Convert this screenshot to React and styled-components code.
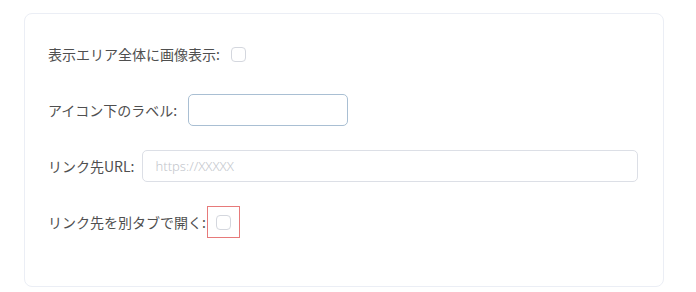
import React from "react";
import styled, { createGlobalStyle } from "styled-components";

const GlobalStyle = createGlobalStyle`
  body {
    margin: 0;
    background: #fff;
    font-family: "Noto Sans CJK JP", "Noto Sans", sans-serif;
  }
`;

const Page = styled.div`
  padding: 13px 32px 6px 24px;
`;

const Card = styled.div`
  border: 1px solid #ebeef5;
  border-radius: 8px;
  padding: 24px 25px 24px 23px;
`;

const Row = styled.div`
  display: flex;
  align-items: center;
  height: 32px;
  margin-bottom: 24px;
`;

const Label = styled.label`
  font-size: 14px;
  color: #4f4f4f;
  white-space: nowrap;
  margin-right: ${(p) => p.$gap ?? 6}px;
`;

const Checkbox = styled.span`
  display: inline-block;
  box-sizing: border-box;
  width: 15px;
  height: 15px;
  border: 1px solid #d4d7de;
  border-radius: 4px;
  background: #fff;
`;

const ErrorBox = styled.div`
  box-sizing: border-box;
  width: 33px;
  height: 32px;
  border: 1px solid #e77a7a;
  display: flex;
  align-items: center;
  justify-content: center;
`;

const Input = styled.input`
  box-sizing: border-box;
  height: 32px;
  width: ${(p) => (p.$grow ? "auto" : "160px")};
  flex: ${(p) => (p.$grow ? 1 : "none")};
  border: 1px solid ${(p) => (p.$active ? "#a9bfd3" : "#dcdfe6")};
  border-radius: 5px;
  padding: 0 12px;
  font-family: "Noto Sans", sans-serif;
  font-size: 13px;
  font-weight: 300;
  color: #333;
  outline: none;

  &::placeholder {
    color: #c3c6cc;
  }
`;

export default function App() {
  return (
    <>
      <GlobalStyle />
      <Page>
        <Card>
          <Row>
            <Label $gap={11}>表示エリア全体に画像表示:</Label>
            <Checkbox />
          </Row>
          <Row>
            <Label $gap={11}>アイコン下のラベル:</Label>
            <Input $active />
          </Row>
          <Row>
            <Label $gap={8}>リンク先URL:</Label>
            <Input $grow placeholder="https://XXXXX" />
          </Row>
          <Row>
            <Label $gap={1}>リンク先を別タブで開く:</Label>
            <ErrorBox>
              <Checkbox />
            </ErrorBox>
          </Row>
        </Card>
      </Page>
    </>
  );
}
